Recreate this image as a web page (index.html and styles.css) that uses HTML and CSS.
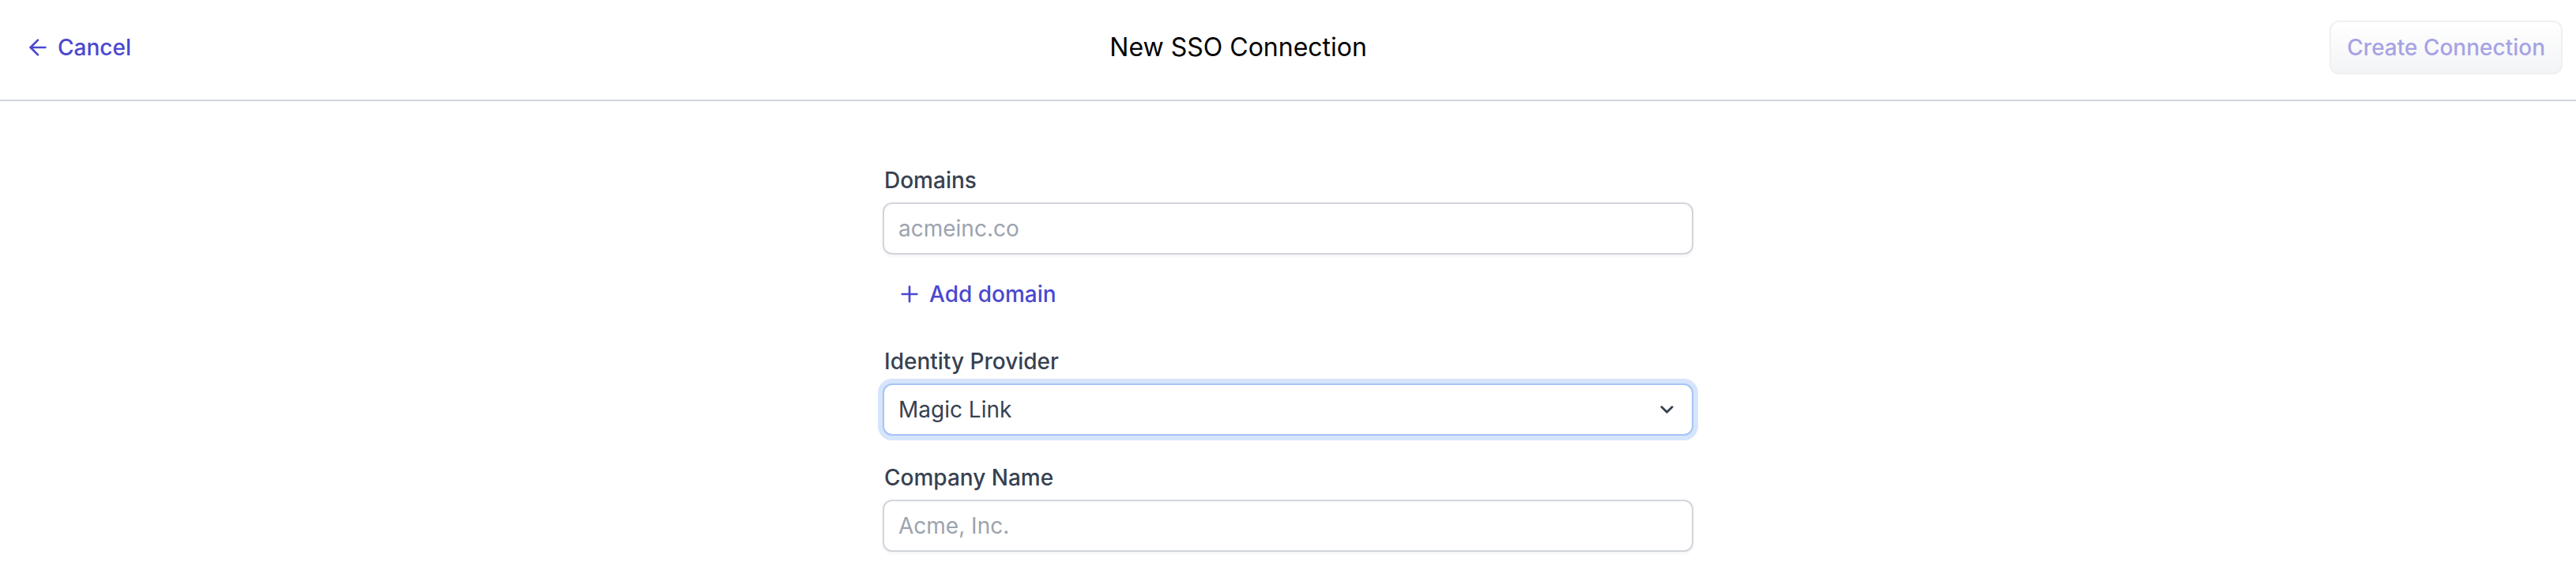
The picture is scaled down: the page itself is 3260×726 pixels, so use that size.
FILE: index.html
```html
<!DOCTYPE html>
<html lang="en">
<head>
<meta charset="utf-8">
<title>New SSO Connection</title>
<link rel="stylesheet" href="styles.css">
</head>
<body>
<header class="topbar">
  <a class="back-link" href="#">
    <svg class="icon" viewBox="0 0 24 24" fill="none" stroke="currentColor" stroke-width="2" stroke-linecap="round" stroke-linejoin="round"><path d="m12 19-7-7 7-7"/><path d="M19 12H5"/></svg>
    <span>Cancel</span>
  </a>
  <h1 class="title">New SSO Connection</h1>
  <button class="create-btn" type="button" disabled>Create Connection</button>
</header>
<main class="page">
  <form class="form">
    <div class="field">
      <label class="label" for="domain">Domains</label>
      <input class="input" id="domain" type="text" placeholder="acmeinc.co">
    </div>
    <button class="add-btn" type="button">
      <svg class="icon" viewBox="0 0 24 24" fill="none" stroke="currentColor" stroke-width="2" stroke-linecap="round" stroke-linejoin="round"><path d="M5 12h14"/><path d="M12 5v14"/></svg>
      <span>Add domain</span>
    </button>
    <div class="field field-idp">
      <label class="label" for="idp">Identity Provider</label>
      <div class="select">
        <span class="select-value">Magic Link</span>
        <svg class="chevron" viewBox="0 0 20 12" fill="none" stroke="currentColor" stroke-width="3" stroke-linecap="round" stroke-linejoin="round"><path d="M3 2.5l7 7 7-7"/></svg>
      </div>
    </div>
    <div class="field field-company">
      <label class="label" for="company">Company Name</label>
      <input class="input" id="company" type="text" placeholder="Acme, Inc.">
    </div>
  </form>
</main>
</body>
</html>
```
FILE: styles.css
```css
* { box-sizing: border-box; }
html, body { margin: 0; padding: 0; background: #fff; }
body {
  font-family: Inter, "Noto Sans", "Liberation Sans", sans-serif;
  color: #111827;
  width: 3260px;
  height: 726px;
  overflow: hidden;
}

.topbar {
  height: 128px;
  border-bottom: 2px solid #d1d5db;
  display: flex;
  align-items: center;
  justify-content: space-between;
  padding: 0 17px 6px 12px;
}
.back-link {
  display: flex;
  align-items: center;
  gap: 9px;
  padding: 0 20px;
  color: #4b48cf;
  text-decoration: none;
  font-size: 28px;
  font-weight: 500;
  line-height: 40px;
}
.icon { width: 32px; height: 32px; flex: none; }
.title {
  margin: 0;
  font-size: 32px;
  font-weight: 400;
  line-height: 48px;
  color: #000;
}
.create-btn {
  font-family: inherit;
  font-size: 28px;
  font-weight: 500;
  line-height: 40px;
  height: 68px;
  padding: 0 20px;
  border: 2px solid #eef0f3;
  border-radius: 12px;
  background: linear-gradient(#ffffff, #f3f4f6);
  color: #a6a3e4;
}

.page {
  display: flex;
  justify-content: center;
  padding-top: 80px;
}
.form {
  width: 1026px;
  display: flex;
  flex-direction: column;
  align-items: stretch;
}
.field { display: flex; flex-direction: column; gap: 8px; }
.label {
  font-size: 28px;
  font-weight: 500;
  line-height: 40px;
  color: #374151;
  padding-left: 2px;
}
.input {
  height: 66px;
  border: 2px solid #d1d5db;
  border-radius: 12px;
  box-shadow: 0 2px 4px rgba(0, 0, 0, 0.05);
  padding: 0 18px;
  font-family: inherit;
  font-size: 28px;
  color: #374151;
  outline: none;
  background: #fff;
}
.input::placeholder { color: #9ca3af; }

.add-btn {
  align-self: flex-start;
  display: flex;
  align-items: center;
  gap: 9px;
  margin-top: 22px;
  padding: 8px 18px;
  border: 0;
  background: none;
  font-family: inherit;
  font-size: 28px;
  font-weight: 500;
  line-height: 40px;
  color: #4b48cf;
}

.field-idp { margin-top: 37px; }
.select {
  height: 66px;
  border: 2px solid #a4c4f6;
  border-radius: 12px;
  box-shadow: 0 0 0 6px #d6e5fc;
  display: flex;
  align-items: center;
  justify-content: space-between;
  padding: 0 22px 0 18px;
  background: #fff;
}
.select-value {
  font-size: 28px;
  color: #374151;
}
.chevron { width: 19px; height: 12px; color: #374151; }

.field-company { margin-top: 33px; }
```
